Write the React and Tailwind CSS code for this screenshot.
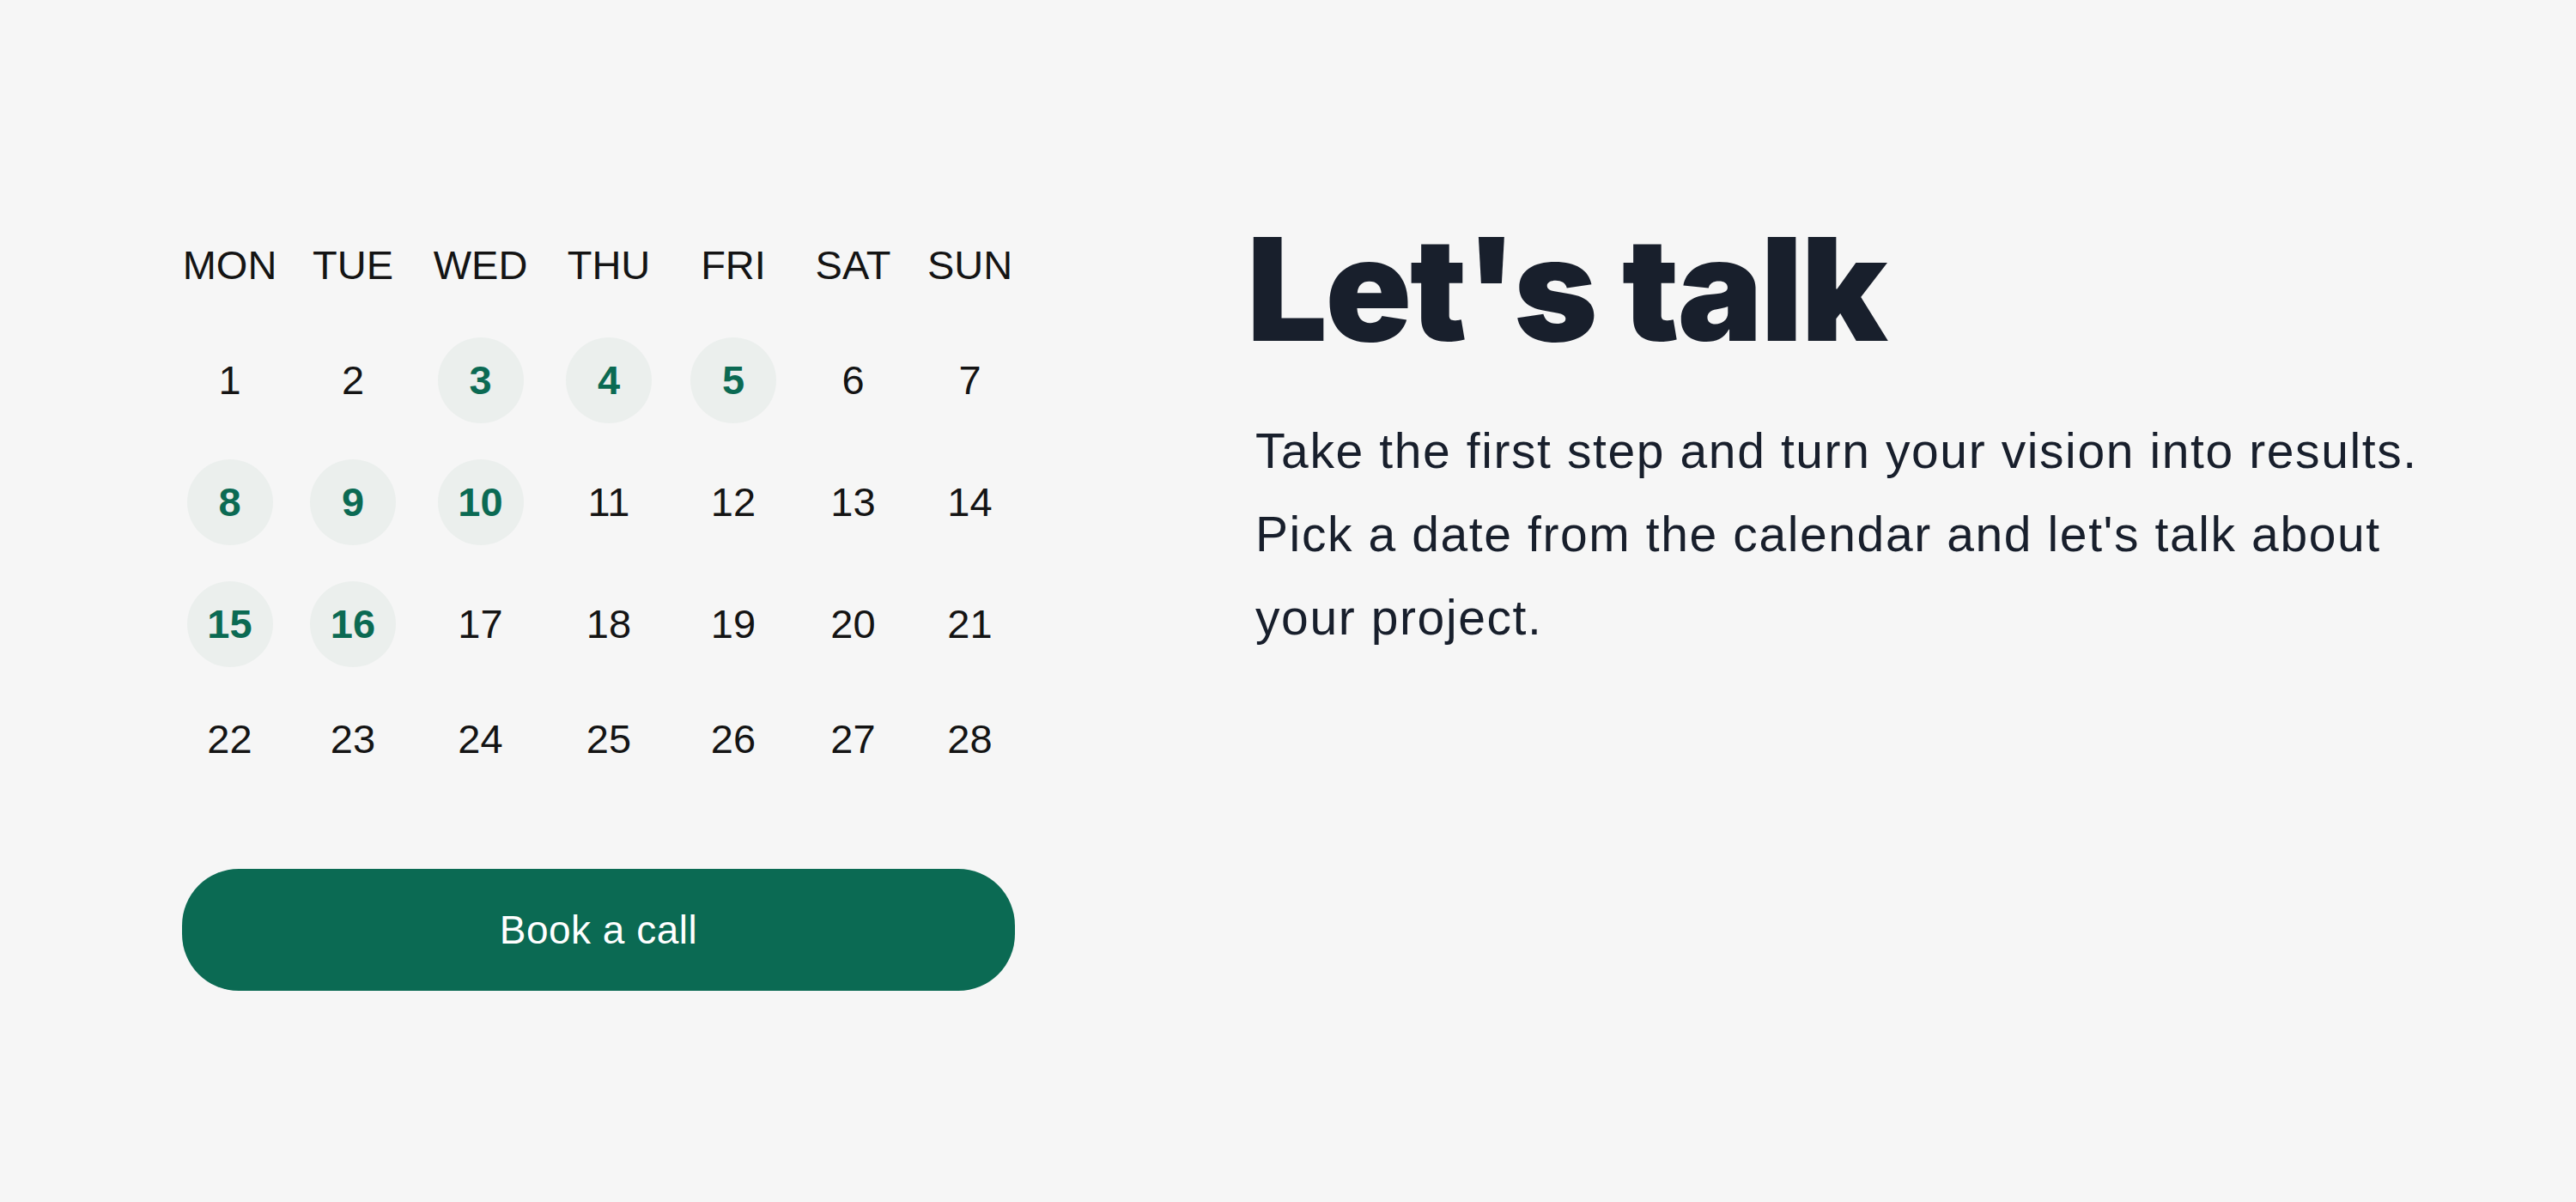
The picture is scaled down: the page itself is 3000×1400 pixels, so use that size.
import React from "react";

const cols = "grid grid-cols-[141px_146px_151px_148px_142px_137px_135px]";
const headers = ["MON", "TUE", "WED", "THU", "FRI", "SAT", "SUN"];
const highlighted = new Set([3, 4, 5, 8, 9, 10, 15, 16]);

function Day({ n }) {
  const hi = highlighted.has(n);
  return (
    <div className="flex h-[100px] items-center justify-center">
      {hi ? (
        <div className="flex h-[100px] w-[100px] items-center justify-center rounded-full bg-[#ebefed] font-bold text-[#0b6a53]">
          {n}
        </div>
      ) : (
        <span className="text-[#141414]">{n}</span>
      )}
    </div>
  );
}

export default function App() {
  const rows = [
    [1, 2, 3, 4, 5, 6, 7],
    [8, 9, 10, 11, 12, 13, 14],
    [15, 16, 17, 18, 19, 20, 21],
  ];
  const last = [22, 23, 24, 25, 26, 27, 28];
  return (
    <div className="flex min-h-[1400px] w-full bg-[#f6f6f6] font-['Liberation_Sans',Arial,sans-serif]">
      <div className="ml-[197px] flex w-[1000px] flex-col pt-[281px] text-[47px] leading-[56px]">
        <div className={`${cols} h-[56px]`}>
          {headers.map((h) => (
            <div key={h} className="flex items-center justify-center text-[#141414]">
              {h}
            </div>
          ))}
        </div>
        <div className={`${cols} mt-[56px] gap-y-[42px]`}>
          {rows.flat().map((n) => (
            <Day key={n} n={n} />
          ))}
        </div>
        <div className={`${cols} mt-[34px]`}>
          {last.map((n) => (
            <Day key={n} n={n} />
          ))}
        </div>
        <button className="mx-[15px] mt-[101px] flex h-[142px] items-center justify-center rounded-[66px] bg-[#0b6a53] text-[46px] font-medium tracking-[0.5px] text-white">
          Book a call
        </button>
      </div>
      <div className="ml-[255px] flex flex-col pt-[253px]">
        <h1 className="font-['Inter',sans-serif] text-[166px] font-black leading-[168px] tracking-[-2.3px] text-[#181f2c]">
          Let's talk
        </h1>
        <p className="ml-[10px] mt-[56px] text-[57px] leading-[97px] tracking-[1.6px] text-[#181f2c]">
          Take the first step and turn your vision into results.
          <br />
          Pick a date from the calendar and let's talk about
          <br />
          your project.
        </p>
      </div>
    </div>
  );
}
